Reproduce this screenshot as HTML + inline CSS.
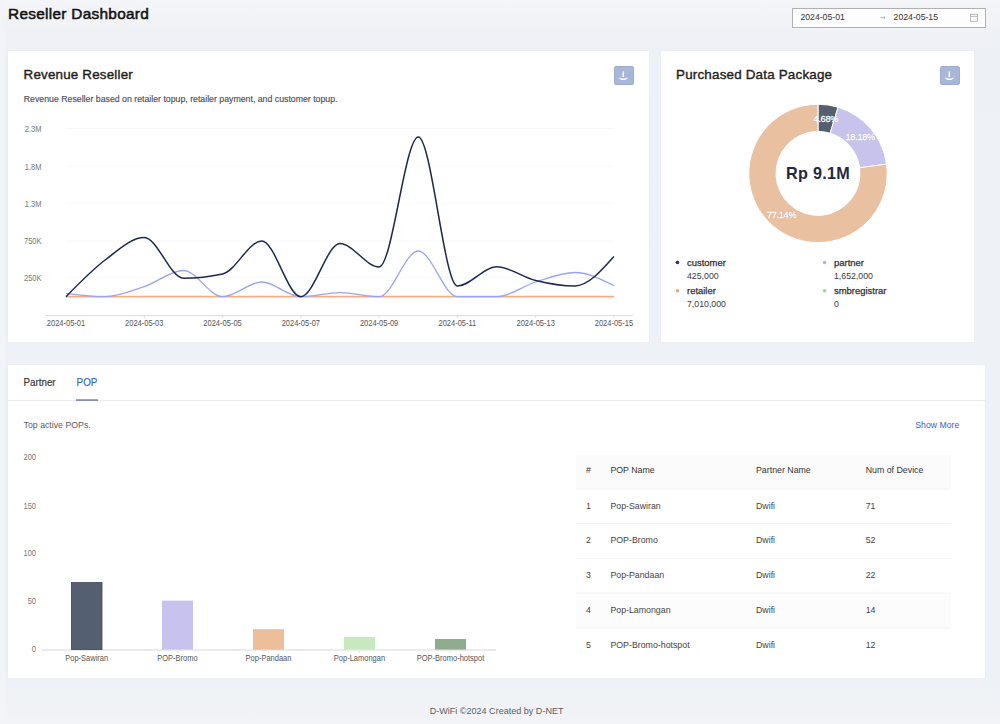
<!DOCTYPE html>
<html><head><meta charset="utf-8">
<style>
*{margin:0;padding:0;box-sizing:border-box}
html,body{width:1000px;height:724px;overflow:hidden}
body{background:linear-gradient(180deg,#f4f5f8 0px,#edf0f4 50px,#eef1f5 360px,#eef1f5 680px,#f2f4f7 724px);font-family:"Liberation Sans",sans-serif;position:relative;color:#222}
.a{position:absolute;white-space:nowrap;line-height:1}
.card{position:absolute;background:#fff;border:1px solid #eceef2}
.dl{position:absolute;width:19.7px;height:19px;background:#a8b6d8;border:1px solid #9dadd2;border-radius:2px}
svg{position:absolute;left:0;top:0}
</style></head><body>
<div style="position:absolute;left:0;top:0;width:5px;height:724px;background:#f3f4f7"></div>
<div class="a" style="left:8.00px;top:5.96px;font-size:15.4px;color:#111;-webkit-text-stroke:0.5px #111;letter-spacing:0.28px;">Reseller Dashboard</div>
<div style="position:absolute;left:792px;top:8px;width:194px;height:20px;border:1px solid #b0b0b0;background:#fdfdfd"></div>
<div class="a" style="left:800.40px;top:13.04px;font-size:8.7px;color:#333;">2024-05-01</div>
<div class="a" style="left:893.60px;top:13.04px;font-size:8.7px;color:#333;">2024-05-15</div>
<div class="card" style="left:7px;top:50px;width:642.6px;height:292.6px"></div>
<div class="card" style="left:660px;top:50px;width:314.6px;height:292.6px"></div>
<div class="card" style="left:7px;top:364px;width:978.6px;height:315px"></div>
<div class="a" style="left:23.60px;top:68.06px;font-size:13.4px;color:#1e1e1e;-webkit-text-stroke:0.38px #1e1e1e;letter-spacing:0.18px;">Revenue Reseller</div>
<div class="a" style="left:23.80px;top:94.99px;font-size:8.75px;color:#4e4e58;-webkit-text-stroke:0.15px #4e4e58;">Revenue Reseller based on retailer topup, retailer payment, and customer topup.</div>
<div class="dl" style="left:613.9px;top:65.9px"></div>
<div class="a" style="left:676.00px;top:67.86px;font-size:13.4px;color:#1e1e1e;-webkit-text-stroke:0.38px #1e1e1e;letter-spacing:0.2px;">Purchased Data Package</div>
<div class="dl" style="left:939.9px;top:65.9px"></div>
<svg width="1000" height="724" viewBox="0 0 1000 724">
  <path d="M880.5,17.6 h4.5 M883.6,16.4 l1.4,1.2 l-1.4,1.2" stroke="#999" stroke-width="0.7" fill="none"/>
  <rect x="970.5" y="14.3" width="7" height="7" fill="none" stroke="#aaa" stroke-width="0.8"/>
  <path d="M970.5,16.4 h7" stroke="#aaa" stroke-width="0.8"/>
  <g fill="#fff">
    <path d="M622.75,71.3 L623.75,71.3 L624.15,76.9 L622.35,76.9 Z M618.9,77.3 Q619.4,80.1 623.3,80.1 Q627.2,80.1 627.9,77.3 Q626.6,78.5 623.3,78.5 Q620.1,78.5 618.9,77.3 Z"/>
    <path d="M948.75,71.3 L949.75,71.3 L950.15,76.9 L948.35,76.9 Z M944.9,77.3 Q945.4,80.1 949.3,80.1 Q953.2,80.1 953.9,77.3 Q952.6,78.5 949.3,78.5 Q946.1,78.5 944.9,77.3 Z"/>
  </g>
  <g stroke="#f8f8f8" stroke-width="1">
    <path d="M66,128.6 H614 M66,166.7 H614 M66,203.7 H614 M66,241 H614 M66,277.7 H614"/>
  </g>
  <path d="M46,315.5 H633" stroke="#dcdcdc" stroke-width="1"/>
  <g stroke="#dcdcdc" stroke-width="1"><path d="M144.3,315 v3 M222.6,315 v3 M300.8,315 v3 M379.1,315 v3 M457.4,315 v3 M535.7,315 v3 M614,315 v3"/></g>
  <path d="M66,296.7 H614" stroke="#f4ae84" stroke-width="1.8"/>
  <path d="M66.00,293.30 C79.05,295.00 92.09,296.70 105.14,296.70 C118.19,296.70 131.23,290.97 144.28,286.60 C157.33,282.23 170.37,270.50 183.42,270.50 C196.47,270.50 209.51,296.70 222.56,296.70 C235.61,296.70 248.65,282.00 261.70,282.00 C274.75,282.00 287.79,296.70 300.84,296.70 C313.89,296.70 326.93,292.60 339.98,292.60 C353.03,292.60 366.07,296.70 379.12,296.70 C392.17,296.70 405.21,251.00 418.26,251.00 C431.31,251.00 444.35,296.70 457.40,296.70 C470.45,296.70 483.49,296.70 496.54,296.70 C509.59,296.70 522.63,286.03 535.68,282.00 C548.73,277.97 561.77,272.50 574.82,272.50 C587.87,272.50 600.91,279.05 613.96,285.60" stroke="#9ba4f3" stroke-width="1.3" fill="none"/>
  <path d="M66.00,296.70 C79.05,283.27 92.09,269.85 105.14,260.00 C118.19,250.15 131.23,237.60 144.28,237.60 C157.33,237.60 170.37,278.20 183.42,278.20 C196.47,278.20 209.51,276.80 222.56,274.00 C235.61,271.20 248.65,241.00 261.70,241.00 C274.75,241.00 287.79,296.70 300.84,296.70 C313.89,296.70 326.93,243.60 339.98,243.60 C353.03,243.60 366.07,267.00 379.12,267.00 C392.17,267.00 405.21,137.00 418.26,137.00 C431.31,137.00 444.35,286.00 457.40,286.00 C470.45,286.00 483.49,266.80 496.54,266.80 C509.59,266.80 522.63,277.30 535.68,280.50 C548.73,283.70 561.77,286.00 574.82,286.00 C587.87,286.00 600.91,271.25 613.96,256.50" stroke="#1c2850" stroke-width="1.5" fill="none"/>
  <path d="M818.00,104.20 A69.20,69.20 0 0 1 838.06,107.17 L830.17,133.20 A42.00,42.00 0 0 0 818.00,131.40 Z" fill="#546070" stroke="#fff" stroke-width="1"/>
<path d="M838.06,107.17 A69.20,69.20 0 0 1 886.58,164.12 L859.62,167.77 A42.00,42.00 0 0 0 830.17,133.20 Z" fill="#c7c3ed" stroke="#fff" stroke-width="1"/>
<path d="M886.58,164.12 A69.20,69.20 0 1 1 818.00,104.20 L818.00,131.40 A42.00,42.00 0 1 0 859.62,167.77 Z" fill="#e9c1a1" stroke="#fff" stroke-width="1"/>

  <circle cx="677.5" cy="262.5" r="1.8" fill="#27335e"/>
  <circle cx="824.6" cy="262.5" r="1.8" fill="#b0b1f2"/>
  <circle cx="677.5" cy="290.8" r="1.8" fill="#f5a56e"/>
  <circle cx="824.6" cy="290.8" r="1.8" fill="#9ad49a"/>
  <path d="M7,400.5 H985" stroke="#ececec" stroke-width="1"/>
  <path d="M76,400.1 H98" stroke="#848ea8" stroke-width="1.8"/>
  <path d="M41.6,650 H496" stroke="#d8d8d8" stroke-width="1"/>
  <path d="M86.7,650 v3 M177.5,650 v3 M268.5,650 v3 M359.5,650 v3 M450.5,650 v3" stroke="#e4e4e4" stroke-width="0.8"/>
  <rect x="71.4" y="582.6" width="30.6" height="67" fill="#546070" stroke="#3e4654" stroke-width="0.8"/>
  <rect x="162" y="600.6" width="31" height="49" fill="#c8c3ee"/>
  <rect x="253" y="629.2" width="31" height="20.5" fill="#ecbf9a"/>
  <rect x="344" y="637" width="31" height="12.6" fill="#c8e8c0"/>
  <rect x="435" y="639" width="31" height="10.6" fill="#8fac8f"/>
  <rect x="576" y="455" width="375" height="34" fill="#fbfbfb"/>
  <rect x="576" y="593" width="375" height="35" fill="#fcfcfc"/>
  <g stroke="#f2f2f2" stroke-width="1">
    <path d="M576,489 H951 M576,523.5 H951 M576,558.5 H951 M576,593 H951 M576,628 H951"/>
  </g>
</svg>
<div class="a" style="left:-58.50px;top:125.65px;font-size:7.5px;color:#777;width:100px;text-align:right;transform:scaleY(1.12);transform-origin:50% 84.65%;">2.3M</div>
<div class="a" style="left:-58.50px;top:163.75px;font-size:7.5px;color:#777;width:100px;text-align:right;transform:scaleY(1.12);transform-origin:50% 84.65%;">1.8M</div>
<div class="a" style="left:-58.50px;top:200.75px;font-size:7.5px;color:#777;width:100px;text-align:right;transform:scaleY(1.12);transform-origin:50% 84.65%;">1.3M</div>
<div class="a" style="left:-58.50px;top:238.05px;font-size:7.5px;color:#777;width:100px;text-align:right;transform:scaleY(1.12);transform-origin:50% 84.65%;">750K</div>
<div class="a" style="left:-58.50px;top:274.75px;font-size:7.5px;color:#777;width:100px;text-align:right;transform:scaleY(1.12);transform-origin:50% 84.65%;">250K</div>
<div class="a" style="left:-54.00px;top:320.05px;font-size:7.5px;color:#555;width:240px;text-align:center;transform:scaleY(1.12);transform-origin:50% 84.65%;">2024-05-01</div>
<div class="a" style="left:24.28px;top:320.05px;font-size:7.5px;color:#555;width:240px;text-align:center;transform:scaleY(1.12);transform-origin:50% 84.65%;">2024-05-03</div>
<div class="a" style="left:102.56px;top:320.05px;font-size:7.5px;color:#555;width:240px;text-align:center;transform:scaleY(1.12);transform-origin:50% 84.65%;">2024-05-05</div>
<div class="a" style="left:180.84px;top:320.05px;font-size:7.5px;color:#555;width:240px;text-align:center;transform:scaleY(1.12);transform-origin:50% 84.65%;">2024-05-07</div>
<div class="a" style="left:259.12px;top:320.05px;font-size:7.5px;color:#555;width:240px;text-align:center;transform:scaleY(1.12);transform-origin:50% 84.65%;">2024-05-09</div>
<div class="a" style="left:337.40px;top:320.05px;font-size:7.5px;color:#555;width:240px;text-align:center;transform:scaleY(1.12);transform-origin:50% 84.65%;">2024-05-11</div>
<div class="a" style="left:415.68px;top:320.05px;font-size:7.5px;color:#555;width:240px;text-align:center;transform:scaleY(1.12);transform-origin:50% 84.65%;">2024-05-13</div>
<div class="a" style="left:493.96px;top:320.05px;font-size:7.5px;color:#555;width:240px;text-align:center;transform:scaleY(1.12);transform-origin:50% 84.65%;">2024-05-15</div>
<div class="a" style="left:698.00px;top:165.09px;font-size:16.2px;color:#1f2a44;font-weight:bold;width:240px;text-align:center;letter-spacing:0.25px;">Rp 9.1M</div>
<div class="a" style="left:705.80px;top:114.70px;font-size:9.1px;color:#fff;width:240px;text-align:center;-webkit-text-stroke:0.3px #fff;letter-spacing:-0.25px;text-shadow:0 0 1px rgba(0,0,0,0.3);">4.68%</div>
<div class="a" style="left:740.20px;top:132.70px;font-size:9.1px;color:#fff;width:240px;text-align:center;-webkit-text-stroke:0.3px #fff;letter-spacing:-0.25px;text-shadow:0 0 1px rgba(0,0,0,0.3);">18.18%</div>
<div class="a" style="left:661.60px;top:210.50px;font-size:9.1px;color:#fff;width:240px;text-align:center;-webkit-text-stroke:0.3px #fff;letter-spacing:-0.25px;text-shadow:0 0 1px rgba(0,0,0,0.3);">77.14%</div>
<div class="a" style="left:687.00px;top:257.60px;font-size:9.45px;color:#2e2e33;-webkit-text-stroke:0.25px #2e2e33;">customer</div>
<div class="a" style="left:687.00px;top:272.39px;font-size:8.75px;color:#3a3a44;">425,000</div>
<div class="a" style="left:687.00px;top:285.80px;font-size:9.45px;color:#2e2e33;-webkit-text-stroke:0.25px #2e2e33;">retailer</div>
<div class="a" style="left:687.00px;top:299.99px;font-size:8.75px;color:#3a3a44;">7,010,000</div>
<div class="a" style="left:834.00px;top:257.60px;font-size:9.45px;color:#2e2e33;-webkit-text-stroke:0.25px #2e2e33;">partner</div>
<div class="a" style="left:834.00px;top:272.39px;font-size:8.75px;color:#3a3a44;">1,652,000</div>
<div class="a" style="left:834.00px;top:285.80px;font-size:9.45px;color:#2e2e33;-webkit-text-stroke:0.25px #2e2e33;">smbregistrar</div>
<div class="a" style="left:834.00px;top:299.99px;font-size:8.75px;color:#3a3a44;">0</div>
<div class="a" style="left:23.50px;top:377.60px;font-size:9.8px;color:#333;-webkit-text-stroke:0.15px #333;transform:scaleY(1.06);transform-origin:50% 84.65%;">Partner</div>
<div class="a" style="left:76.60px;top:377.60px;font-size:9.8px;color:#3563c6;-webkit-text-stroke:0.15px #3563c6;transform:scaleY(1.06);transform-origin:50% 84.65%;">POP</div>
<div class="a" style="left:23.60px;top:420.99px;font-size:8.75px;color:#5c5c5c;">Top active POPs.</div>
<div class="a" style="left:915.30px;top:420.84px;font-size:8.7px;color:#3c62c0;">Show More</div>
<div class="a" style="left:-64.00px;top:454.45px;font-size:7.5px;color:#777;width:100px;text-align:right;transform:scaleY(1.12);transform-origin:50% 84.65%;">200</div>
<div class="a" style="left:-64.00px;top:502.95px;font-size:7.5px;color:#777;width:100px;text-align:right;transform:scaleY(1.12);transform-origin:50% 84.65%;">150</div>
<div class="a" style="left:-64.00px;top:550.35px;font-size:7.5px;color:#777;width:100px;text-align:right;transform:scaleY(1.12);transform-origin:50% 84.65%;">100</div>
<div class="a" style="left:-64.00px;top:598.05px;font-size:7.5px;color:#777;width:100px;text-align:right;transform:scaleY(1.12);transform-origin:50% 84.65%;">50</div>
<div class="a" style="left:-64.00px;top:645.65px;font-size:7.5px;color:#777;width:100px;text-align:right;transform:scaleY(1.12);transform-origin:50% 84.65%;">0</div>
<div class="a" style="left:-33.30px;top:655.05px;font-size:7.5px;color:#555;width:240px;text-align:center;transform:scaleY(1.12);transform-origin:50% 84.65%;">Pop-Sawiran</div>
<div class="a" style="left:57.50px;top:655.05px;font-size:7.5px;color:#555;width:240px;text-align:center;transform:scaleY(1.12);transform-origin:50% 84.65%;">POP-Bromo</div>
<div class="a" style="left:148.50px;top:655.05px;font-size:7.5px;color:#555;width:240px;text-align:center;transform:scaleY(1.12);transform-origin:50% 84.65%;">Pop-Pandaan</div>
<div class="a" style="left:239.50px;top:655.05px;font-size:7.5px;color:#555;width:240px;text-align:center;transform:scaleY(1.12);transform-origin:50% 84.65%;">Pop-Lamongan</div>
<div class="a" style="left:330.50px;top:655.05px;font-size:7.5px;color:#555;width:240px;text-align:center;transform:scaleY(1.12);transform-origin:50% 84.65%;">POP-Bromo-hotspot</div>
<div class="a" style="left:586.00px;top:466.35px;font-size:8.8px;color:#333;">#</div>
<div class="a" style="left:610.40px;top:466.35px;font-size:8.8px;color:#333;">POP Name</div>
<div class="a" style="left:756.00px;top:466.35px;font-size:8.8px;color:#333;">Partner Name</div>
<div class="a" style="left:865.70px;top:466.35px;font-size:8.8px;color:#333;">Num of Device</div>
<div class="a" style="left:586.00px;top:501.55px;font-size:8.8px;color:#444;">1</div>
<div class="a" style="left:610.40px;top:501.55px;font-size:8.8px;color:#444;">Pop-Sawiran</div>
<div class="a" style="left:756.00px;top:501.55px;font-size:8.8px;color:#444;">Dwifi</div>
<div class="a" style="left:865.70px;top:501.55px;font-size:8.8px;color:#444;">71</div>
<div class="a" style="left:586.00px;top:536.30px;font-size:8.8px;color:#444;">2</div>
<div class="a" style="left:610.40px;top:536.30px;font-size:8.8px;color:#444;">POP-Bromo</div>
<div class="a" style="left:756.00px;top:536.30px;font-size:8.8px;color:#444;">Dwifi</div>
<div class="a" style="left:865.70px;top:536.30px;font-size:8.8px;color:#444;">52</div>
<div class="a" style="left:586.00px;top:571.05px;font-size:8.8px;color:#444;">3</div>
<div class="a" style="left:610.40px;top:571.05px;font-size:8.8px;color:#444;">Pop-Pandaan</div>
<div class="a" style="left:756.00px;top:571.05px;font-size:8.8px;color:#444;">Dwifi</div>
<div class="a" style="left:865.70px;top:571.05px;font-size:8.8px;color:#444;">22</div>
<div class="a" style="left:586.00px;top:605.80px;font-size:8.8px;color:#444;">4</div>
<div class="a" style="left:610.40px;top:605.80px;font-size:8.8px;color:#444;">Pop-Lamongan</div>
<div class="a" style="left:756.00px;top:605.80px;font-size:8.8px;color:#444;">Dwifi</div>
<div class="a" style="left:865.70px;top:605.80px;font-size:8.8px;color:#444;">14</div>
<div class="a" style="left:586.00px;top:640.55px;font-size:8.8px;color:#444;">5</div>
<div class="a" style="left:610.40px;top:640.55px;font-size:8.8px;color:#444;">POP-Bromo-hotspot</div>
<div class="a" style="left:756.00px;top:640.55px;font-size:8.8px;color:#444;">Dwifi</div>
<div class="a" style="left:865.70px;top:640.55px;font-size:8.8px;color:#444;">12</div>
<div class="a" style="left:376.60px;top:706.94px;font-size:9.05px;color:#5c5c62;width:240px;text-align:center;">D-WiFi ©2024 Created by D-NET</div>
</body></html>
